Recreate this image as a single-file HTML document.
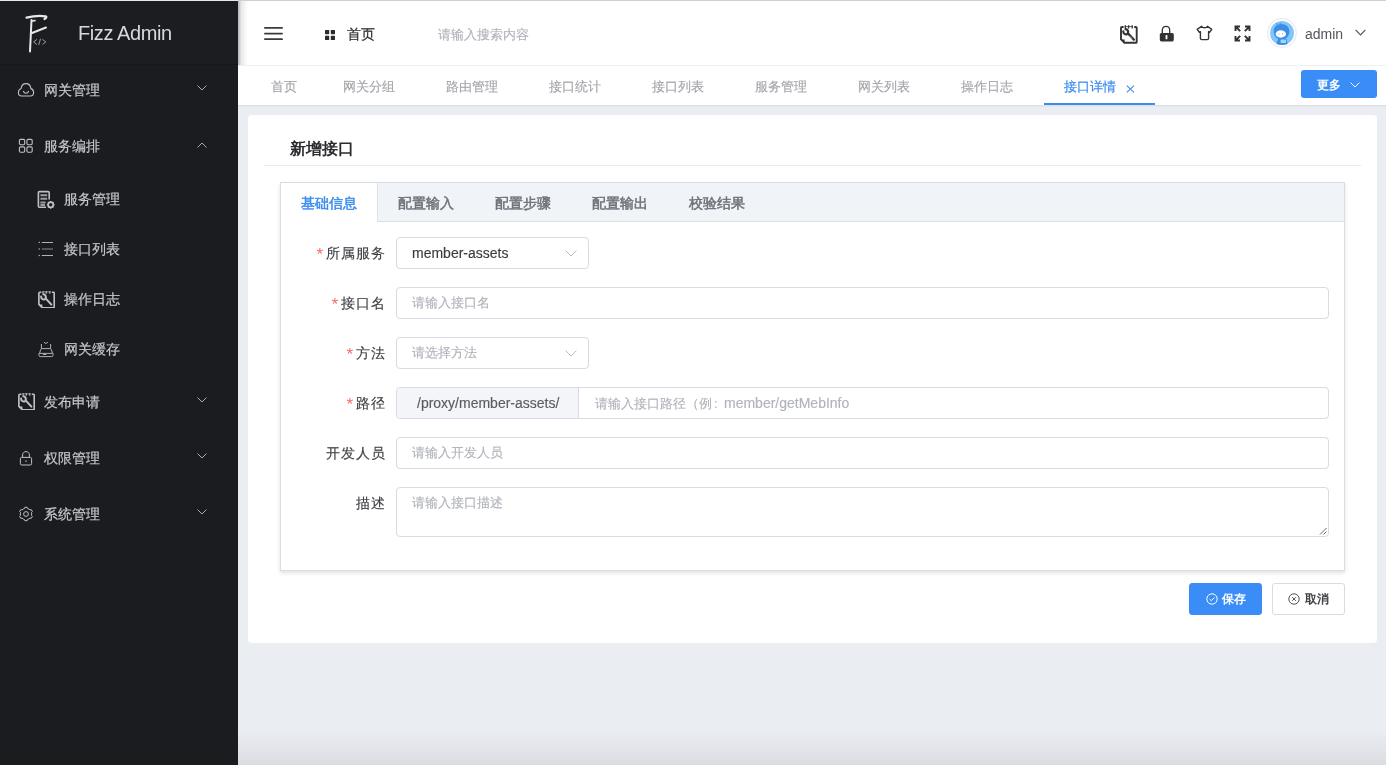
<!DOCTYPE html>
<html><head><meta charset="utf-8">
<style>
*{box-sizing:border-box;margin:0;padding:0}
html,body{width:1386px;height:765px;overflow:hidden;font-family:"Liberation Sans",sans-serif;background:#eaedf2}
.abs{position:absolute}
#side{position:absolute;left:0;top:0;width:238px;height:765px;background:#1b1c20}
#logo{position:absolute;left:0;top:0;width:238px;height:65px;background:#1c1d21}
#logo .t{position:absolute;left:78px;top:21px;font-size:20px;color:#d8d9db;line-height:24px;letter-spacing:-0.4px}
.mi{position:absolute;left:0;width:238px;color:#c6c7ca;font-size:14px;line-height:20px;-webkit-text-stroke:0.2px currentColor}
.mi .tx{position:absolute;left:44px;top:0}
.mi.sub .tx{left:64px}
.mi svg{position:absolute}
#header{position:absolute;left:238px;top:0;width:1148px;height:65px;background:#fff;border-top:1px solid #cdd0d5}
#header .shadow{position:absolute;left:0;top:0;width:10px;height:64px;background:linear-gradient(to right,rgba(160,165,173,.8),rgba(190,194,200,.35) 35%,rgba(255,255,255,0))}
#tabs{position:absolute;left:238px;top:65px;width:1148px;height:40px;background:#fff;border-top:1px solid #eef0f3}
.tb{position:absolute;top:13px;font-size:13px;line-height:16px;color:#a3a5aa}
#main{position:absolute;left:238px;top:105px;width:1148px;height:660px;background:#eaedf2}
#card{position:absolute;left:248px;top:115px;width:1129px;height:528px;background:#fff;border-radius:4px}
.lbl{position:absolute;font-size:14px;line-height:16px;color:#3f4145;-webkit-text-stroke:0.15px currentColor;text-align:right;right:1000px;letter-spacing:1px}
.star{color:#f56c6c;margin-right:3px;font-size:17px;position:relative;top:2px;letter-spacing:0;-webkit-text-stroke:0}
.inp{position:absolute;left:396px;height:32px;border:1px solid #d8dae4;border-radius:4px;background:#fff;font-size:13px;line-height:30px;padding-left:15px;color:#b1b4bb}
.inp .en{font-size:14px}
.inp,.tb{-webkit-text-stroke:0.15px currentColor}
#tc{position:absolute;left:280px;top:182px;width:1065px;height:389px;background:#fff;border:1px solid #d9dce3;box-shadow:0 2px 4px rgba(0,0,0,.12)}
#tc .hd{position:absolute;left:0;top:0;width:1063px;height:39px;background:#f0f3f8;border-bottom:1px solid #dcdfe6}
#tc .act{position:absolute;left:0;top:0;width:97px;height:39px;background:#fff;border-right:1px solid #dfe2e8}
#tc .ttx{position:absolute;top:12px;font-size:14px;line-height:16px;color:#6e7177;-webkit-text-stroke:0.5px currentColor}
.sel .chev{position:absolute;right:11px;top:12px}
.btn{height:32px;border:1px solid;border-radius:3px;font-size:12px;line-height:16px;font-weight:bold}
#root{position:absolute;left:0;top:0;width:1386px;height:765px;will-change:transform}
</style></head><body><div id="root">
<div id="side">
  <div class="abs" style="left:0;top:0;width:238px;height:1px;background:#e6e8ec;z-index:2"></div><div class="abs" style="left:0;top:64px;width:238px;height:1px;background:#17181c;z-index:2"></div>
  <div id="logo">
    <svg class="abs" style="left:20px;top:10px" width="34" height="46" viewBox="0 0 34 46">
      <path d="M6.5 7.6 C11 6.5 20 5.5 25.5 6.3 C27 6.6 26.5 8 24.5 9" fill="none" stroke="#e8e8e8" stroke-width="2.2" stroke-linecap="round"/>
      <path d="M11.5 10 C11 20 10.5 32 10 41.5" fill="none" stroke="#e8e8e8" stroke-width="2" stroke-linecap="round"/>
      <path d="M11.8 11 L15 10.6" fill="none" stroke="#e8e8e8" stroke-width="1.6" stroke-linecap="round"/>
      <path d="M12 23 L26 17.5" fill="none" stroke="#e8e8e8" stroke-width="2" stroke-linecap="round"/>
      <path d="M16.6 29.6 L13.6 31.9 L16.6 34.2 M20.4 29.2 L18.8 34.6 M22.8 29.6 L25.8 31.9 L22.8 34.2" fill="none" stroke="#a9aaad" stroke-width="0.9" stroke-linecap="round" stroke-linejoin="round"/>
    </svg>
    <div class="t">Fizz Admin</div>
  </div>
  <!-- menu -->
  <div class="mi" style="top:80px">
    <svg style="left:14px;top:-2px" width="24" height="22" viewBox="0 0 24 22"><path d="M7.6 18 H16.4 C18.4 18 19.6 16.4 19.6 14.5 C19.6 12.5 18.3 11 16.9 10.6 C16.5 7.4 14.6 5.6 12 5.6 C9.4 5.6 7.5 7.4 7.1 10.4 C5.6 10.9 4.4 12.5 4.4 14.5 C4.4 16.4 5.7 18 7.6 18 Z" fill="none" stroke="#bfc0c3" stroke-width="1.1"/><path d="M9.5 13.3 C10.1 15.8 13.9 15.8 14.5 13.3" fill="none" stroke="#bfc0c3" stroke-width="1.1" stroke-linecap="round"/></svg>
    <div class="tx">网关管理</div>
    <svg style="left:197px;top:5px" width="10" height="6" viewBox="0 0 10 6"><path d="M0.5 0.5 L5 5 L9.5 0.5" fill="none" stroke="#a8a9ac" stroke-width="1"/></svg>
  </div>
  <div class="mi" style="top:136px">
    <svg style="left:18px;top:2px" width="16" height="16" viewBox="0 0 16 16"><g fill="none" stroke="#bfc0c3" stroke-width="1.1"><rect x="1.4" y="1.4" width="5.3" height="5.3" rx="1.2"/><rect x="8.9" y="1.4" width="5.3" height="5.3" rx="1.2"/><rect x="1.4" y="8.9" width="5.3" height="5.3" rx="1.2"/><rect x="8.9" y="8.9" width="5.3" height="5.3" rx="1.2"/></g></svg>
    <div class="tx">服务编排</div>
    <svg style="left:197px;top:6px" width="10" height="6" viewBox="0 0 10 6"><path d="M0.5 5.5 L5 1 L9.5 5.5" fill="none" stroke="#a8a9ac" stroke-width="1"/></svg>
  </div>
  <div class="mi sub" style="top:189px">
    <svg style="left:37px;top:1px" width="19" height="19" viewBox="0 0 19 19"><path d="M12.2 9.5 V2.6 Q12.2 1.6 11.2 1.6 H2.4 Q1.4 1.6 1.4 2.6 V16.2 Q1.4 17.2 2.4 17.2 H9" fill="none" stroke="#bfc0c3" stroke-width="1.6"/><path d="M3.4 5.3 H10.2 M3.4 8.8 H10.2 M3.4 12.4 H8.6 M3.4 15 H8" stroke="#9c9da0" stroke-width="2"/><circle cx="13.7" cy="14.8" r="2.6" fill="none" stroke="#bfc0c3" stroke-width="1.7"/><path d="M13.7 10.9 V12 M13.7 17.6 V18.7 M9.8 14.8 H10.9 M16.5 14.8 H17.6 M11 12.1 L11.7 12.8 M15.7 16.8 L16.4 17.5 M16.4 12.1 L15.7 12.8 M11 17.5 L11.7 16.8" stroke="#bfc0c3" stroke-width="1.3"/></svg>
    <div class="tx">服务管理</div>
  </div>
  <div class="mi sub" style="top:239px">
    <svg style="left:38px;top:2px" width="16" height="16" viewBox="0 0 16 16"><g fill="#bfc0c3"><rect x="0.6" y="0.8" width="1.2" height="1.2"/><rect x="0.6" y="7.4" width="1.2" height="1.2"/><rect x="0.6" y="13.9" width="1.2" height="1.2"/></g><path d="M3.8 1.5 H15 M3.8 14.5 H15" stroke="#b0b1b4" stroke-width="1"/><path d="M3.8 8 H15" stroke="#88898c" stroke-width="1"/></svg>
    <div class="tx">接口列表</div>
  </div>
  <div class="mi sub" style="top:289px">
    <svg style="left:38px;top:2px" width="17" height="17" viewBox="4.1 3.7 17.4 17.4"><path d="M7.6 5 H6 Q5 5 5 6 V17.4 L8.4 20.8 H19.8 Q20.7 20.8 20.7 19.9 V6 Q20.7 5 19.8 5 H18.2" fill="none" stroke="#bfc0c3" stroke-width="1.7" stroke-linejoin="round"/><path d="M5.2 17.6 H8.6 V20.6 Z" fill="#bfc0c3"/><path d="M9.3 3.4 V6.4 M12.6 3.4 V6.4 M16.2 3.4 V6.4" stroke="#bfc0c3" stroke-width="1.1"/><path d="M8.6 4.6 H17" stroke="#bfc0c3" stroke-width="0.7"/><path d="M9.6 7.1 C11.6 7.3 12.6 9.2 11.9 11.2 L17.8 17.6" fill="none" stroke="#bfc0c3" stroke-width="2.1" stroke-linecap="round"/><path d="M7.3 9.4 C7.2 11.6 9.2 12.9 11.2 12.2" fill="none" stroke="#bfc0c3" stroke-width="2" stroke-linecap="round"/></svg>
    <div class="tx">操作日志</div>
  </div>
  <div class="mi sub" style="top:339px">
    <svg style="left:34px;top:-3px" width="24" height="24" viewBox="0 0 24 24"><path d="M10.2 6.4 L11.9 7.6 L13.6 6.4" fill="none" stroke="#bfc0c3" stroke-width="0.9" stroke-linecap="round" stroke-linejoin="round"/><path d="M7.4 8 V12.5 M16.6 8 V12.5" stroke="#b4b5b8" stroke-width="1"/><path d="M5.6 17.4 L6.6 13.6 Q6.9 12.6 7.9 12.6 H16.1 Q17.1 12.6 17.4 13.6 L18.4 17.4" fill="none" stroke="#bfc0c3" stroke-width="0.9"/><path d="M4.9 18 Q4.6 17.4 5.4 17.4 H18.6 Q19.4 17.4 19.1 18 L19 19.4 Q18.9 20.6 17.8 20.6 H6.2 Q5.1 20.6 5 19.4 Z" fill="none" stroke="#bfc0c3" stroke-width="0.9"/><path d="M9.2 18.5 H12.2" stroke="#b4b5b8" stroke-width="1"/></svg>
    <div class="tx">网关缓存</div>
  </div>
  <div class="mi" style="top:392px">
    <svg style="left:18px;top:1px" width="17" height="17" viewBox="4.1 3.7 17.4 17.4"><path d="M7.6 5 H6 Q5 5 5 6 V17.4 L8.4 20.8 H19.8 Q20.7 20.8 20.7 19.9 V6 Q20.7 5 19.8 5 H18.2" fill="none" stroke="#bfc0c3" stroke-width="1.7" stroke-linejoin="round"/><path d="M5.2 17.6 H8.6 V20.6 Z" fill="#bfc0c3"/><path d="M9.3 3.4 V6.4 M12.6 3.4 V6.4 M16.2 3.4 V6.4" stroke="#bfc0c3" stroke-width="1.1"/><path d="M8.6 4.6 H17" stroke="#bfc0c3" stroke-width="0.7"/><path d="M9.6 7.1 C11.6 7.3 12.6 9.2 11.9 11.2 L17.8 17.6" fill="none" stroke="#bfc0c3" stroke-width="2.1" stroke-linecap="round"/><path d="M7.3 9.4 C7.2 11.6 9.2 12.9 11.2 12.2" fill="none" stroke="#bfc0c3" stroke-width="2" stroke-linecap="round"/></svg>
    <div class="tx">发布申请</div>
    <svg style="left:197px;top:5px" width="10" height="6" viewBox="0 0 10 6"><path d="M0.5 0.5 L5 5 L9.5 0.5" fill="none" stroke="#a8a9ac" stroke-width="1"/></svg>
  </div>
  <div class="mi" style="top:448px">
    <svg style="left:19px;top:2px" width="14" height="16" viewBox="0 0 14 16"><path d="M3.6 7.2 V5 C3.6 3 5 1.6 7 1.6 C9 1.6 10.4 3 10.4 5 V7.2" fill="none" stroke="#bfc0c3" stroke-width="1"/><rect x="1.4" y="7.4" width="11.2" height="7.6" rx="1.3" fill="none" stroke="#bfc0c3" stroke-width="1"/><rect x="6.4" y="10.4" width="1.2" height="1.4" fill="#bfc0c3"/></svg>
    <div class="tx">权限管理</div>
    <svg style="left:197px;top:5px" width="10" height="6" viewBox="0 0 10 6"><path d="M0.5 0.5 L5 5 L9.5 0.5" fill="none" stroke="#a8a9ac" stroke-width="1"/></svg>
  </div>
  <div class="mi" style="top:504px">
    <svg style="left:18px;top:2px" width="16" height="16" viewBox="0 0 16 16"><path d="M5.15 3.06 L6.52 2.49 L6.82 1.30 L9.18 1.30 L9.48 2.49 L10.85 3.06 L12.03 3.97 L13.21 3.63 L14.39 5.67 L13.51 6.52 L13.70 8.00 L13.51 9.48 L14.39 10.33 L13.21 12.37 L12.03 12.03 L10.85 12.94 L9.48 13.51 L9.18 14.70 L6.82 14.70 L6.52 13.51 L5.15 12.94 L3.97 12.03 L2.79 12.37 L1.61 10.33 L2.49 9.48 L2.30 8.00 L2.49 6.52 L1.61 5.67 L2.79 3.63 L3.97 3.97 Z" fill="none" stroke="#bfc0c3" stroke-width="1" stroke-linejoin="round"/><circle cx="8" cy="8" r="2.4" fill="none" stroke="#bfc0c3" stroke-width="1"/></svg>
    <div class="tx">系统管理</div>
    <svg style="left:197px;top:5px" width="10" height="6" viewBox="0 0 10 6"><path d="M0.5 0.5 L5 5 L9.5 0.5" fill="none" stroke="#a8a9ac" stroke-width="1"/></svg>
  </div>
</div>
<div id="header"><div class="shadow"></div>
  <svg class="abs" style="left:26px;top:25px" width="19" height="15" viewBox="0 0 19 15"><path d="M0.9 1.9 H18.1 M0.9 7.6 H18.1 M0.9 13.2 H18.1" stroke="#3a3a3a" stroke-width="1.7" stroke-linecap="round"/></svg>
  <svg class="abs" style="left:87px;top:29px" width="10" height="10" viewBox="0 0 10 10"><g fill="#2b2b2b"><rect x="0" y="0" width="4.2" height="4.2" rx="0.6"/><rect x="5.8" y="0" width="4.2" height="4.2" rx="0.6"/><rect x="0" y="5.8" width="4.2" height="4.2" rx="0.6"/><rect x="5.8" y="5.8" width="4.2" height="4.2" rx="0.6"/></g></svg>
  <div class="abs" style="left:109px;top:24px;font-size:14px;line-height:18px;color:#2c2d30;-webkit-text-stroke:0.2px currentColor">首页</div>
  <div class="abs" style="left:200px;top:25px;font-size:13px;line-height:18px;color:#afb3bb;-webkit-text-stroke:0.15px currentColor">请输入搜索内容</div>
  <!-- right icons -->
  <svg class="abs" style="left:878px;top:21px" width="25" height="24" viewBox="0 0 25 24"><path d="M7.6 5 H6 Q5 5 5 6 V17.4 L8.4 20.8 H19.8 Q20.7 20.8 20.7 19.9 V6 Q20.7 5 19.8 5 H18.2" fill="none" stroke="#333" stroke-width="1.9" stroke-linejoin="round"/><path d="M5.2 17.6 H8.6 V20.6 Z" fill="#333"/><path d="M9.3 3.2 V6.6 M12.6 3.2 V6.6 M16.2 3.2 V6.6" stroke="#333" stroke-width="1.3"/><path d="M8.6 4.6 H17" stroke="#333" stroke-width="0.8"/><path d="M9.6 7.1 C11.6 7.3 12.6 9.2 11.9 11.2 L17.8 17.6" fill="none" stroke="#333" stroke-width="2.3" stroke-linecap="round"/><path d="M7.3 9.4 C7.2 11.6 9.2 12.9 11.2 12.2" fill="none" stroke="#333" stroke-width="2.2" stroke-linecap="round"/><path d="M13.6 14 L16.4 17" stroke="#bbb" stroke-width="0.8"/></svg>
  <svg class="abs" style="left:920px;top:23px" width="16" height="18" viewBox="0 0 16 18"><path d="M4.3 9.4 V6.2 C4.3 3.6 5.9 2.4 8 2.4 C10.1 2.4 11.7 3.6 11.7 6.2 V9.4" fill="none" stroke="#333" stroke-width="1.3"/><rect x="1.8" y="9" width="14" height="8.4" rx="1.6" fill="#333"/><rect x="7.6" y="11" width="1.8" height="4.2" rx="0.5" fill="#fff"/></svg>
  <svg class="abs" style="left:958px;top:24px" width="17" height="16" viewBox="0 0 17 16"><path d="M5.6 1.3 C6.4 2.4 7.4 2.8 8.5 2.8 C9.6 2.8 10.6 2.4 11.4 1.3 L15.8 4.4 L13.6 7.2 L12.6 6.6 V13.2 Q12.6 14.6 11.2 14.6 H5.8 Q4.4 14.6 4.4 13.2 V6.6 L3.4 7.2 L1.2 4.4 Z" fill="none" stroke="#333" stroke-width="1.4" stroke-linejoin="round"/></svg>
  <svg class="abs" style="left:996px;top:24px" width="17" height="17" viewBox="0 0 17 17"><g fill="none" stroke="#333" stroke-width="1.9"><path d="M1.5 6 V1.5 H6 M1.5 1.5 L6.2 6.2"/><path d="M11 1.5 H15.5 V6 M15.5 1.5 L10.8 6.2"/><path d="M1.5 11 V15.5 H6 M1.5 15.5 L6.2 10.8"/><path d="M15.5 11 V15.5 H11 M15.5 15.5 L10.8 10.8"/></g></svg>
  <svg class="abs" style="left:1029px;top:17px" width="30" height="30" viewBox="0 0 30 30"><circle cx="15" cy="15" r="14.3" fill="#fff" stroke="#ebebeb" stroke-width="1.2"/><clipPath id="avc"><circle cx="15" cy="15" r="12"/></clipPath><circle cx="15" cy="15" r="12" fill="#82c6f8"/><g clip-path="url(#avc)"><path d="M6.8 14.5 C6.2 9.6 9.2 6.6 12.4 6.4 L12.8 4.6 L14.6 6.3 C18.6 6 22.2 8.6 22.4 13.2 C22.6 17.8 19.4 21.4 14.6 21.4 C10 21.4 7.2 18.6 6.8 14.5 Z" fill="#3d8de8"/><path d="M9.6 5.2 L10.6 7.6" stroke="#3d8de8" stroke-width="1"/><path d="M11 21 L8.6 28 H21 L19.4 20.6 Z" fill="#3d8de8"/><ellipse cx="13.8" cy="16" rx="5.2" ry="3.7" fill="#fff"/><circle cx="12" cy="15.8" r="0.55" fill="#7ab0ea"/><circle cx="15.6" cy="15.6" r="0.55" fill="#7ab0ea"/><rect x="13.6" y="21.6" width="5.4" height="3.4" rx="0.8" fill="#9fd6fb"/></g></svg>
  <div class="abs" style="left:1067px;top:24px;font-size:14px;line-height:18px;color:#52565c">admin</div>
  <svg class="abs" style="left:1117px;top:28px" width="11" height="7" viewBox="0 0 11 7"><path d="M0.6 0.8 L5.5 5.8 L10.4 0.8" fill="none" stroke="#555" stroke-width="1.2"/></svg>
</div>
<div id="tabs">
  <div class="tb" style="left:33px">首页</div>
  <div class="tb" style="left:105px">网关分组</div>
  <div class="tb" style="left:208px">路由管理</div>
  <div class="tb" style="left:311px">接口统计</div>
  <div class="tb" style="left:414px">接口列表</div>
  <div class="tb" style="left:517px">服务管理</div>
  <div class="tb" style="left:620px">网关列表</div>
  <div class="tb" style="left:723px">操作日志</div>
  <div class="tb" style="left:826px;color:#3b8cf0;-webkit-text-stroke:0.2px currentColor">接口详情</div>
  <svg class="abs" style="left:887.5px;top:19px" width="9" height="8" viewBox="0 0 9 8"><path d="M0.8 0.6 L8 7.4 M8 0.6 L0.8 7.4" stroke="#3b8cf0" stroke-width="1.1"/></svg>
  <div class="abs" style="left:806px;top:37px;width:111px;height:2px;background:#3b8cf0"></div>
  <div class="abs" style="left:1063px;top:4px;width:76px;height:28px;background:#3a8cf7;border-radius:3px"></div>
  <div class="abs" style="left:1079px;top:11px;font-size:12px;line-height:16px;color:#fff;font-weight:bold">更多</div>
  <svg class="abs" style="left:1112px;top:16px" width="10" height="6" viewBox="0 0 10 6"><path d="M0.6 0.6 L5 5 L9.4 0.6" fill="none" stroke="#fff" stroke-width="1"/></svg>
</div>
<div class="abs" style="left:238px;top:105px;width:1148px;height:1px;background:#dcdfe3"></div><div class="abs" style="left:238px;top:106px;width:1148px;height:1px;background:#e4e7eb"></div>
<div id="card"></div>
<div class="abs" style="left:290px;top:140px;font-size:16px;line-height:18px;font-weight:bold;color:#2b2c2f">新增接口</div>
<div class="abs" style="left:264px;top:165px;width:1097px;height:1px;background:#e6e9f0"></div>
<div id="tc">
  <div class="hd"></div>
  <div class="act"></div>
  <div class="ttx" style="left:20px;color:#3b8cf0">基础信息</div>
  <div class="ttx" style="left:117px">配置输入</div>
  <div class="ttx" style="left:214px">配置步骤</div>
  <div class="ttx" style="left:311px">配置输出</div>
  <div class="ttx" style="left:408px">校验结果</div>
</div>
<div class="lbl" style="top:245px"><span class="star">*</span>所属服务</div>
<div class="inp sel" style="top:237px;width:193px;color:#3a3c40"><span class="en">member-assets</span><svg class="chev" width="12" height="7" viewBox="0 0 12 7"><path d="M0.6 0.6 L6 6 L11.4 0.6" fill="none" stroke="#b8bbc2" stroke-width="1"/></svg></div>
<div class="lbl" style="top:295px"><span class="star">*</span>接口名</div>
<div class="inp" style="top:287px;width:933px">请输入接口名</div>
<div class="lbl" style="top:345px"><span class="star">*</span>方法</div>
<div class="inp sel" style="top:337px;width:193px">请选择方法<svg class="chev" width="12" height="7" viewBox="0 0 12 7"><path d="M0.6 0.6 L6 6 L11.4 0.6" fill="none" stroke="#b8bbc2" stroke-width="1"/></svg></div>
<div class="lbl" style="top:395px"><span class="star">*</span>路径</div>
<div class="inp" style="top:387px;width:933px;padding-left:0">
  <div class="abs" style="left:0;top:0;width:182px;height:30px;background:#f3f5f9;border-right:1px solid #d8dae4;border-radius:4px 0 0 4px;color:#5a5c61;padding-left:20px"><span class="en">/proxy/member-assets/</span></div>
  <div class="abs" style="left:198px;top:0">请输入接口路径（例<span style="display:inline-block;width:12px;padding-left:2px">:</span><span class="en">member/getMebInfo</span></div>
</div>
<div class="lbl" style="top:445px">开发人员</div>
<div class="inp" style="top:437px;width:933px">请输入开发人员</div>
<div class="lbl" style="top:495px">描述</div>
<div class="inp" style="top:487px;width:933px;height:50px;line-height:20px;padding-top:5px">请输入接口描述
  <svg class="abs" style="right:1px;bottom:1px" width="8" height="8" viewBox="0 0 8 8"><path d="M7.5 1 L1 7.5 M7.5 4.5 L4.5 7.5" stroke="#555" stroke-width="0.9"/></svg>
</div>
<div class="abs btn" style="left:1189px;top:583px;width:73px;background:#3a8cf7;border-color:#3a8cf7;color:#fff">
  <svg class="abs" style="left:16px;top:9px" width="12" height="12" viewBox="0 0 12 12"><circle cx="6" cy="6" r="5.2" fill="none" stroke="#fff" stroke-width="1"/><path d="M3.6 6.1 L5.3 7.7 L8.4 4.5" fill="none" stroke="#fff" stroke-width="1"/></svg>
  <div class="abs" style="left:32px;top:7px">保存</div>
</div>
<div class="abs btn" style="left:1272px;top:583px;width:73px;background:#fff;border-color:#d9dbe2;color:#404246">
  <svg class="abs" style="left:15px;top:9px" width="12" height="12" viewBox="0 0 12 12"><circle cx="6" cy="6" r="5.2" fill="none" stroke="#555" stroke-width="1"/><path d="M4.2 4.2 L7.8 7.8 M7.8 4.2 L4.2 7.8" fill="none" stroke="#555" stroke-width="1"/></svg>
  <div class="abs" style="left:32px;top:7px">取消</div>
</div>
<div class="abs" style="left:238px;top:731px;width:1148px;height:34px;background:linear-gradient(to bottom,rgba(205,206,209,0),rgba(205,206,209,.28) 55%,rgba(205,206,209,.55))"></div>

</div></body></html>
